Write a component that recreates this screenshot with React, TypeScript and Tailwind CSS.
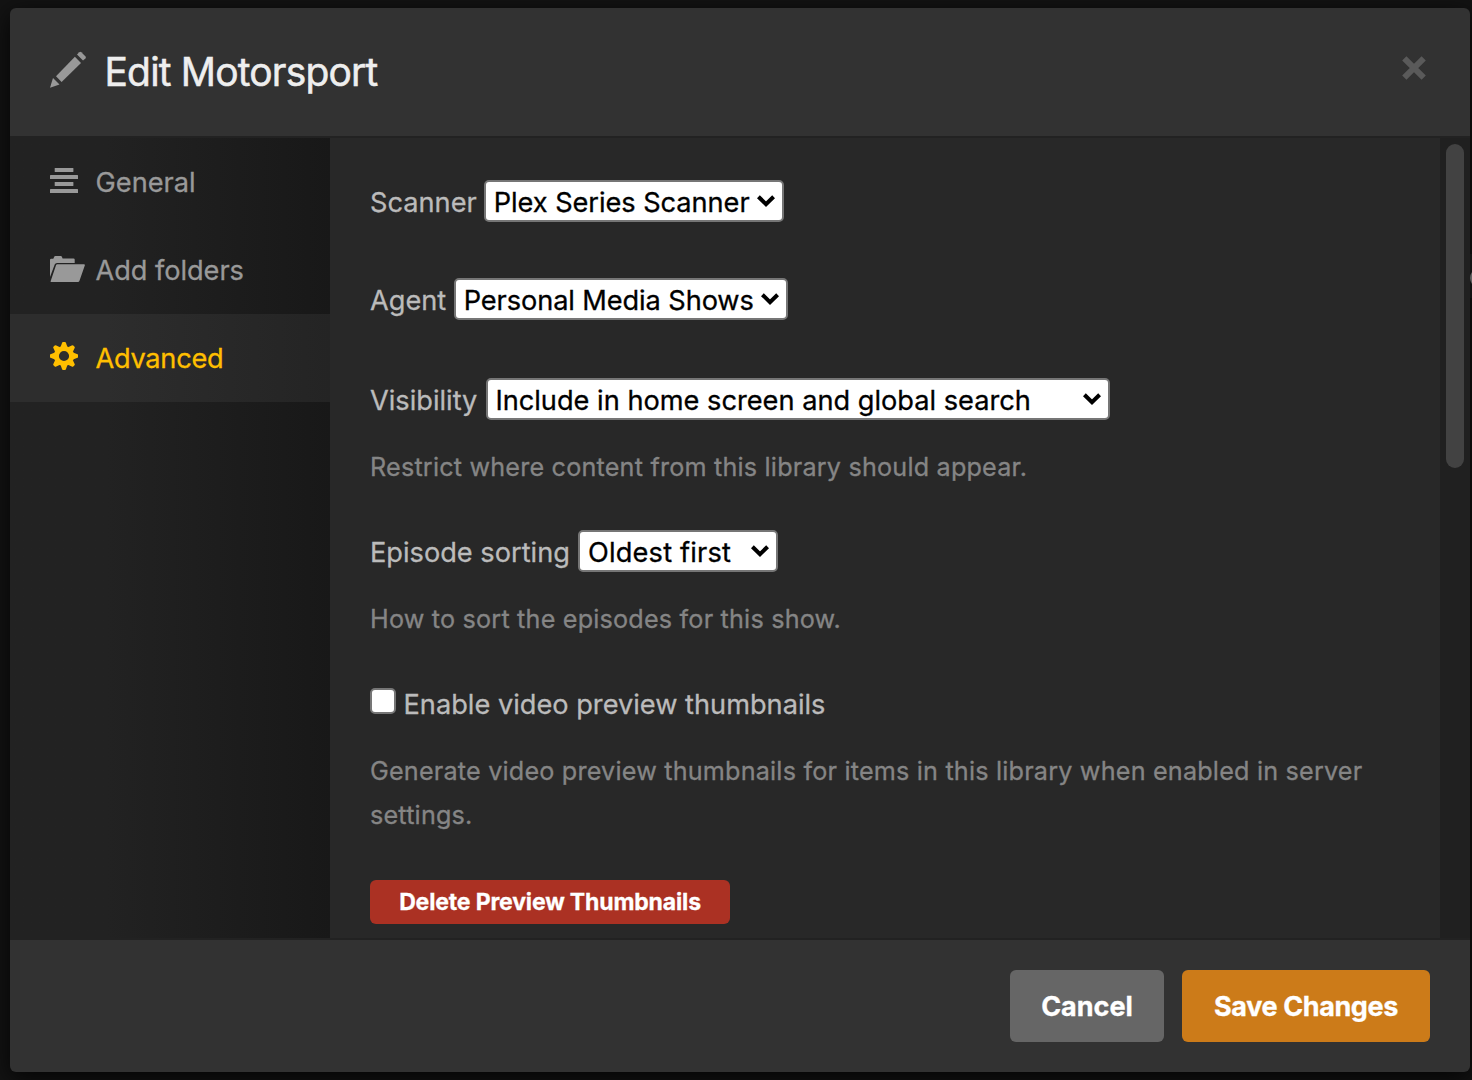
import type { ReactNode } from 'react';

function PencilIcon() {
  return (
    <svg width="36" height="37" viewBox="50 51.5 36 37" fill="#999999" className="mb-[5px] shrink-0">
      <path d="M50 88.200 53 78.500 59.500 85z" />
      <path d="M56 76.700 74.900 57.300 81 63.400 61.600 82.500z" />
      <path d="M77 55.100 79.300 52.700Q80.300 51.800 81.300 52.700L85.300 56.700Q86.400 57.800 85.400 58.900L83 61.100z" />
    </svg>
  );
}

function CloseIcon() {
  return (
    <svg width="24" height="24" viewBox="0 0 24 24" fill="none" stroke="#5a5a5a" strokeWidth="6">
      <path d="M2.300 2.300 21.700 21.700M21.700 2.300 2.300 21.700" />
    </svg>
  );
}

function LinesIcon() {
  return (
    <svg width="28" height="25" viewBox="0 0 28 25" fill="currentColor" className="mb-[3px]">
      <rect x="4.700" y="0" width="18.700" height="4" rx=".5" />
      <rect x="0" y="7" width="28" height="4" rx=".5" />
      <rect x="4.700" y="14" width="18.700" height="4" rx=".5" />
      <rect x="0" y="21" width="28" height="4" rx=".5" />
    </svg>
  );
}

function FolderIcon() {
  return (
    <svg width="35" height="26" viewBox="50 256 35 26" fill="currentColor" className="mb-[2px] shrink-0">
      <path d="M50 277V260Q50 258.700 51.300 258.700H53.300L54.200 256.700Q54.500 256 55.300 256H60.800Q61.600 256 61.900 256.700L62.600 258.400H73.500Q74.700 258.400 74.700 259.600V263H57Q55.300 263 54.700 264.500Z" />
      <path d="M57.300 264.300H84Q85.200 264.300 84.800 265.500L79.400 281Q79 282 77.900 282H51.400Q50.300 282 50.700 280.900L56 265.300Q56.300 264.300 57.300 264.300Z" />
    </svg>
  );
}

function GearIcon() {
  return (
    <svg width="28" height="28" viewBox="-14 -14 28 28" fill="currentColor" className="mb-[4px]">
      <circle r="7.600" fill="none" stroke="currentColor" strokeWidth="5" />
      {[0, 45, 90, 135, 180, 225, 270, 315].map((angle) => (
        <path key={angle} transform={`rotate(${angle})`} d="M-3.400-9 -2-12.900Q-1.800-14-.9-14H.9Q1.800-14 2-12.900L3.400-9z" />
      ))}
    </svg>
  );
}

function NavItem({ icon, label, className }: { icon: ReactNode; label: string; className: string }) {
  return (
    <a className={`flex h-[88px] items-center pl-10 ${className}`}>
      <span className="flex w-[45.5px] items-center">{icon}</span>
      <span className="pt-[2px]">{label}</span>
    </a>
  );
}

function Select({ value, className }: { value: string; className: string }) {
  return (
    <button className={`flex h-[42px] items-center justify-between rounded-[5px] border-2 border-[#767676] bg-white pr-[7px] text-black ${className}`}>
      <span className="pt-[3px] [-webkit-text-stroke:0.3px]">{value}</span>
      <svg width="18" height="12" viewBox="0 0 18 12" fill="none" stroke="black" strokeWidth="4" className="-mt-[1px]">
        <path d="M1.400 1.700 9 9.100 16.600 1.700" />
      </svg>
    </button>
  );
}

function Field({ label, className, children }: { label: string; className: string; children: ReactNode }) {
  return (
    <div className={`flex h-11 items-start leading-[44px] ${className}`}>
      <label className="shrink-0 pt-px">{label}</label>
      {children}
    </div>
  );
}

function Help({ children }: { children: ReactNode }) {
  return <p className="mt-[23px] text-[25.2px] leading-[44px] tracking-[0.19px] text-[#858585]">{children}</p>;
}

export default function App() {
  return (
    <div className="relative h-[1080px] w-[1472px] overflow-hidden whitespace-nowrap bg-[#131313] pl-[10px] pt-2 font-['Inter',sans-serif] text-[27.2px]">
      <div className="absolute right-0 top-[254px] h-11 w-[2px] overflow-hidden bg-[#1f1f1f]">
        <div className="mt-[14px] h-5 w-5 rounded-full border-2 border-[#999]" />
      </div>
      <div className="relative flex h-[1064px] w-[1460px] flex-col overflow-hidden rounded-[6px] bg-[#323232] shadow-[0_6px_24px_rgba(0,0,0,0.8)]">
        <header className="flex h-32 items-center justify-between pl-10 pr-11">
          <div className="flex items-center">
            <PencilIcon />
            <h1 className="ml-[18.5px] text-[39px] tracking-[-0.84px] text-[#eeeeee] [-webkit-text-stroke:0.5px]">Edit Motorsport</h1>
          </div>
          <button className="mb-2">
            <CloseIcon />
          </button>
        </header>

        <div className="flex h-[804px] border-y-2 border-[#222222] bg-[#202020]">
          <nav className="w-80 bg-linear-to-r from-[#222222] from-30% to-[#181818] text-[#999999] [-webkit-text-stroke:0.3px]">
            <NavItem icon={<LinesIcon />} label="General" className="" />
            <NavItem icon={<FolderIcon />} label="Add folders" className="tracking-[-0.05px]" />
            <NavItem
              icon={<GearIcon />}
              label="Advanced"
              className="bg-linear-to-r from-[#2d2d2d] from-30% to-[#242424] tracking-[-0.27px] text-[#ffbf00]"
            />
          </nav>

          <main className="w-[1110px] bg-[#282828] px-10 pt-[42px] text-[#bbbbbb] [-webkit-text-stroke:0.3px]">
            <Field label="Scanner" className="">
              <Select value="Plex Series Scanner" className="ml-[7px] w-[300px] pl-[8px] tracking-[-0.05px]" />
            </Field>
            <Field label="Agent" className="mt-[54px]">
              <Select value="Personal Media Shows" className="ml-2 w-[334px] pl-[7.5px] tracking-[-0.1px]" />
            </Field>
            <Field label="Visibility" className="mt-14">
              <Select value="Include in home screen and global search" className="ml-[9px] w-[624px] pl-[7px]" />
            </Field>
            <Help>Restrict where content from this library should appear.</Help>
            <Field label="Episode sorting" className="mt-[41px]">
              <Select value="Oldest first" className="ml-2 w-[200px] pl-[8px] tracking-[0.2px]" />
            </Field>
            <Help>How to sort the episodes for this show.</Help>
            <label className="mt-[41px] flex h-11 items-center">
              <span className="mb-[6px] mr-[7.5px] size-[26px] rounded-[5px] border-2 border-[#767676] bg-white" />
              <span className="pt-[2px]">Enable video preview thumbnails</span>
            </label>
            <Help>
              Generate video preview thumbnails for items in this library when enabled in server
              <br />
              settings.
            </Help>
            <button className="mt-[43px] block h-11 w-[360px] rounded-[6px] bg-[#ab3123] text-[23px] font-bold leading-[44px] tracking-[-0.15px] text-white">
              Delete Preview Thumbnails
            </button>
          </main>

          <div className="flex flex-1 justify-end pr-[6px] pt-[6px]">
            <div className="h-[324px] w-[18px] rounded-full bg-[#424242]" />
          </div>
        </div>

        <footer className="flex h-[132px] items-center justify-end gap-[18px] pr-10 font-bold text-white [-webkit-text-stroke:0.3px]">
          <button className="h-[72px] w-[154px] rounded-[6px] bg-[#666666] pt-[2px] text-[27px]">Cancel</button>
          <button className="h-[72px] w-[248px] rounded-[6px] bg-[#cc7b19] pt-[2px] text-[27px] tracking-[-0.4px]">
            Save Changes
          </button>
        </footer>
      </div>
    </div>
  );
}
